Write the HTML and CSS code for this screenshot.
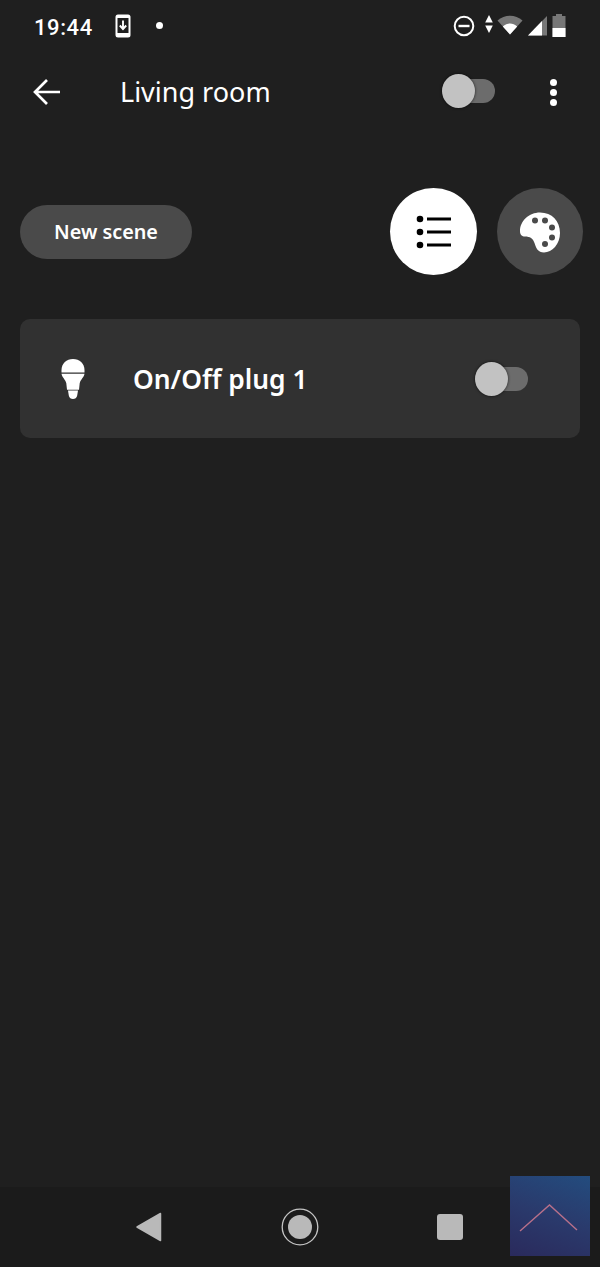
FILE: index.html
```html
<!DOCTYPE html>
<html lang="en">
  <head>
    <meta charset="UTF-8" />
    <meta name="viewport" content="width=device-width, initial-scale=1.0" />
    <title>Living room</title>
    <link rel="stylesheet" href="styles.css">
  </head>
  <body>
    <div class="page">
      <header class="status">
        <span class="time">19:44</span>
        <svg class="ic-download" width="16" height="24" viewBox="0 0 16 24">
          <rect x="0.5" y="0.5" width="15" height="23" rx="2.5" fill="#fff"/>
          <rect x="2.5" y="4" width="11" height="15" fill="#1f1f1f"/>
          <path d="M8 6.5v8M4.8 11.5 8 15l3.2-3.5" fill="none" stroke="#fff" stroke-width="1.9"/>
        </svg>
        <span class="dot"></span>
        <div class="status-right">
          <svg class="ic-dnd" width="22" height="22" viewBox="0 0 22 22">
            <circle cx="11" cy="11" r="9.3" fill="none" stroke="#fff" stroke-width="2"/>
            <rect x="5.5" y="9.8" width="11" height="2.4" fill="#fff"/>
          </svg>
          <svg class="ic-arrows" width="8" height="20" viewBox="0 0 8 20">
            <path d="M4 1 7.800 8.500H.2z M4 19 .2 11.500h7.600z" fill="#fff"/>
          </svg>
          <svg class="ic-wifi" width="26" height="20" viewBox="0 0 26 20">
            <path d="M0.500 5.500C7.500 -0.800 18.500 -0.800 25.500 5.500L13 19.500z" fill="#777"/>
            <path d="M5.800 11.500C10 7.500 16 7.500 20.200 11.500L13 19.500z" fill="#fff"/>
          </svg>
          <svg class="ic-signal" width="20" height="20" viewBox="0 0 20 20">
            <path d="M20 0V19.500H1z" fill="#777"/>
            <path d="M15 5V19.500H1z" fill="#fff"/>
          </svg>
          <svg class="ic-battery" width="14" height="23" viewBox="0 0 14 23">
            <path d="M4 0h6v2h3.500v21H.500V2H4z" fill="#777"/>
            <rect x="0.500" y="14" width="13" height="9" fill="#fff"/>
          </svg>
        </div>
      </header>

      <nav class="appbar">
        <svg class="back" width="30" height="28" viewBox="0 0 30 28">
          <path d="M30 14H5M17 2 5 14 17 26" fill="none" stroke="#fff" stroke-width="2.700"/>
        </svg>
        <h1 class="title">Living room</h1>
        <span class="switch"><span class="knob"></span></span>
        <span class="more"><i></i><i></i><i></i></span>
      </nav>

      <section class="actions">
        <button class="scene-btn">New scene</button>
        <span class="round round-on">
          <svg width="36" height="34" viewBox="0 0 36 34">
            <circle cx="4" cy="4" r="3.300"/><circle cx="4" cy="17" r="3.300"/><circle cx="4" cy="30" r="3.300"/>
            <path d="M11 4h24M11 17h24M11 30h24" stroke="#000" stroke-width="3"/>
          </svg>
        </span>
        <span class="round round-off">
          <svg width="42" height="42" viewBox="0 0 42 42">
            <path fill="#fff" d="M1 20C1 10 10 1.500 21 1.500 33 1.500 41 10 41 22 41 33 33 41.500 25 41.500 19 41.500 17 37 15.500 32 14 27.500 11 25.500 6 25.500 3 25.500 1 24 1 20z"/>
            <circle cx="16" cy="9.500" r="3" fill="#4a4a4a"/>
            <circle cx="26" cy="9.500" r="3" fill="#4a4a4a"/>
            <circle cx="33" cy="16.500" r="3" fill="#4a4a4a"/>
            <circle cx="33" cy="26.500" r="3" fill="#4a4a4a"/>
            <circle cx="26" cy="33" r="3" fill="#4a4a4a"/>
          </svg>
        </span>
      </section>

      <section class="card">
        <svg class="bulb" width="26" height="42" viewBox="0 0 26 42">
          <path fill="#fff" d="M1.500 14.500V12C1.500 5.500 6.500 1 13 1s11.500 4.500 11.500 11v2.500z"/>
          <path fill="#fff" d="M1.500 15.800h23c-.5 3.500-3.800 5.500-4.800 9.500l-.7 6.500H7l-.7-6.500c-1-4-4.300-6-4.800-9.500z"/>
          <path fill="#fff" d="M8 32.500h10l-.8 5c-.4 2.500-2.200 3.500-4.200 3.500s-3.800-1-4.200-3.500z"/>
        </svg>
        <span class="card-name">On/Off plug 1</span>
        <span class="switch"><span class="knob"></span></span>
      </section>

      <footer class="navbar">
        <svg width="26" height="30" viewBox="0 0 26 30"><path d="M24.500 1.500v27L1 15z" fill="#b9b9b9" stroke="#b9b9b9" stroke-linejoin="round" stroke-width="1.500"/></svg>
        <svg width="38" height="38" viewBox="0 0 38 38">
          <circle cx="19" cy="19" r="17.800" fill="none" stroke="#c4c4c4" stroke-width="1.300"/>
          <circle cx="19" cy="19" r="12" fill="#b9b9b9"/>
        </svg>
        <span class="nav-square"></span>
      </footer>

      <a class="to-top" href="#">
        <svg width="80" height="80" viewBox="0 0 80 80">
          <path d="M10 55 39.500 29 67 54" fill="none" stroke="#b8708a" stroke-width="1.400"/>
        </svg>
      </a>
    </div>
  </body>
</html>
```

FILE: styles.css
```css
* {
  box-sizing: border-box;
}
html,
body {
  margin: 0;
  height: 100%;
}
body {
  background-color: #1f1f1f;
  color: #fff;
  font-family: "Noto Sans", "Open Sans", sans-serif;
}
.page {
  position: relative;
  display: flex;
  flex-direction: column;
  height: 1267px;
  overflow: hidden;
}

/* status bar */
.status {
  display: flex;
  align-items: center;
  height: 52px;
  padding: 2px 34px 0 34px;
}
.time {
  width: 80px;
  font-family: Roboto, sans-serif;
  font-size: 22px;
  font-weight: 500;
  letter-spacing: 0.6px;
}
.ic-download {
  margin-left: 1px;
  margin-top: -2px;
}
.dot {
  width: 7px;
  height: 7px;
  margin-left: 25px;
  margin-top: -4px;
  border-radius: 50%;
  background-color: #fff;
}
.status-right {
  display: flex;
  align-items: center;
  margin-left: auto;
}
.ic-dnd {
  margin-top: -2px;
}
.ic-arrows {
  margin-left: 10px;
  margin-top: -6px;
}
.ic-wifi {
  margin-left: 4px;
  margin-top: -4px;
}
.ic-signal {
  margin-left: 4px;
  margin-top: -3px;
}
.ic-battery {
  margin-left: 5px;
  margin-top: -3px;
}

/* app bar */
.appbar {
  display: flex;
  align-items: center;
  height: 80px;
  padding: 0 43px 0 30px;
}
.back {
  flex: none;
}
.title {
  margin: 0 0 0 60px;
  font-size: 27px;
  font-weight: 400;
  line-height: 34px;
}
.switch {
  position: relative;
  display: block;
  flex: none;
  width: 53px;
  height: 24px;
  margin-left: auto;
  border-radius: 12px;
  background: linear-gradient(to right, transparent 16px, #6c6c6c 16px);
}
.appbar .switch {
  margin-top: -2px;
}
.knob {
  position: absolute;
  left: 0;
  top: -5px;
  width: 33px;
  height: 34px;
  border-radius: 50%;
  background-color: #c2c2c2;
  box-shadow: 0 0 3px rgba(0, 0, 0, 0.7);
}
.more {
  display: flex;
  flex-direction: column;
  gap: 3px;
  margin-left: 55px;
}
.more i {
  display: block;
  width: 7px;
  height: 7px;
  border-radius: 50%;
  background-color: #fff;
}

/* scene row */
.actions {
  display: flex;
  align-items: center;
  height: 87px;
  margin-top: 56px;
  padding: 0 17px 0 20px;
}
.scene-btn {
  width: 172px;
  height: 54px;
  margin-right: auto;
  border: 0;
  border-radius: 27px;
  background-color: #4a4a4a;
  color: #fff;
  font-family: "Noto Sans", sans-serif;
  font-size: 19.8px;
  font-weight: 600;
}
.round {
  display: flex;
  align-items: center;
  justify-content: center;
  width: 87px;
  height: 87px;
  border-radius: 50%;
}
.round-on {
  background-color: #fff;
}
.round-off {
  width: 86px;
  margin-left: 20px;
  background-color: #4a4a4a;
}

/* device card */
.card {
  display: flex;
  align-items: center;
  height: 119px;
  margin: 44px 20px 0;
  padding: 0 52px 0 40px;
  border-radius: 10px;
  background-color: #313131;
}
.bulb {
  flex: none;
}
.card-name {
  margin-left: 47px;
  font-size: 26.4px;
  font-weight: 600;
}

/* android nav */
.navbar {
  display: flex;
  align-items: center;
  justify-content: space-between;
  height: 80px;
  margin-top: auto;
  padding: 0 137px 0 136px;
  background-color: #1b1b1b;
}
.nav-square {
  width: 26px;
  height: 26px;
  border-radius: 3px;
  background-color: #b9b9b9;
}
.to-top {
  position: absolute;
  right: 10px;
  bottom: 11px;
  display: block;
  width: 80px;
  height: 80px;
  background: linear-gradient(200deg, #234c7e, #2a3a6c 50%, #2a2a5c);
}
.to-top svg {
  display: block;
}
```
